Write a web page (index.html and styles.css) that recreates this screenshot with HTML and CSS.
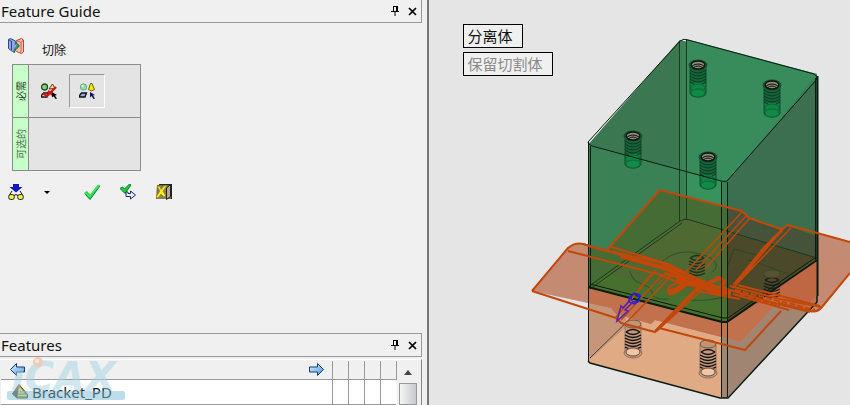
FILE: index.html
```html
<!DOCTYPE html>
<html lang="zh-CN">
<head>
  <meta charset="UTF-8" />
  <meta name="viewport" content="width=device-width, initial-scale=1" />
  <title>Feature Guide</title>
  <link rel="stylesheet" href="styles.css">
</head>
<body>
  <svg class="defs" width="0" height="0" aria-hidden="true">
    <defs>
      <g id="pin"><path d="M2 .5h5M2.500 0v5M5.500 0v5M6.500 0v5M0 5.500h8M4 6v4" fill="none" stroke="#000"/></g>
      <g id="close"><path d="M1 1l7 7M8 1L1 8" fill="none" stroke="#000" stroke-width="1.700"/></g>
      <linearGradient id="arrowFill" x1="0" y1="0" x2="1" y2="1">
        <stop offset="0" stop-color="#e8f6ff"/><stop offset="1" stop-color="#3b8ee0"/>
      </linearGradient>
    </defs>
  </svg>

  <div class="app">
    <aside class="sidebar">
      <section class="guide">
        <header class="panel-bar">
          <h2>Feature Guide</h2>
          <button class="bar-btn" aria-label="Pin"><svg width="9" height="10"><use href="#pin"/></svg></button>
          <button class="bar-btn" aria-label="Close"><svg width="9" height="9"><use href="#close"/></svg></button>
        </header>

        <div class="feature-name">
          <svg width="16" height="16" viewBox="0 0 16 16">
            <path d="M.5 1.500l2-1 5 2.500v3l2 2-3 3v3.500l-2-1-4-3z" fill="#8fa6e6" stroke="#35458c"/>
            <path d="M3.500 3v9M.5 1.500l3 2" stroke="#35458c" fill="none"/>
            <path d="M8.500 2.500l5-2 2 1.500v12l-2 1.500-5-2-2-1.500 4.500-4-3-3z" fill="#f8c3b5" stroke="#c2402e"/>
            <path d="M13 4.500l2.500-2.500M13 4.500v10M13 4.500l-4-2" stroke="#c2402e" fill="none" stroke-width=".8"/>
            <path d="M7 3.500l4 4.500-5 5" fill="none" stroke="#1d8d35" stroke-width="1.500"/>
          </svg>
          <span>切除</span>
        </div>

        <div class="steps">
          <div class="step-label needed">必需</div>
          <div class="step-body">
            <button class="step-btn" aria-label="选择目标体">
              <svg width="16" height="16" viewBox="0 0 16 16">
                <circle cx="3.500" cy="4" r="3" fill="#8fc878" stroke="#14501c" stroke-width="1.300"/>
                <path d="M8 6l3.500-5 2.500 4.500z" fill="#f0e6a0" stroke="#5b3a10"/>
                <path d="M.5 12.500l2-2.500h5l-1.500 4H.5z" fill="#fff" stroke="#111" stroke-width="1.300"/>
                <path d="M2 10.500l4 2.500 9-9M7 8l6 5" stroke="#d4151a" stroke-width="2.400" fill="none"/>
                <path d="M11 9l5 3-2 .5 2 3-1.500.5-2-3-1.500 1.500z" fill="#000"/>
              </svg>
            </button>
            <button class="step-btn selected" aria-label="选择工具体">
              <svg width="16" height="16" viewBox="0 0 16 16">
                <circle cx="4.500" cy="4" r="3.200" fill="#8fdcae" stroke="#6aa883"/>
                <circle cx="3.500" cy="3" r="1" fill="#fff"/>
                <path d="M9.500 6.500l2-6h1.500l2.500 6-3 1.500z" fill="#f4e800" stroke="#6c6000"/>
                <path d="M.5 12.500l2-2.500h5l-1.500 4H.5z" fill="#8ea8ee" stroke="#111" stroke-width="1.300"/>
                <path d="M11 9l5 3-2 .5 2 3-1.500.5-2-3-1.500 1.500z" fill="#13135e"/>
              </svg>
            </button>
          </div>
          <div class="step-label">可选的</div>
          <div class="step-body"></div>
        </div>

        <div class="actions">
          <button class="action" aria-label="预览">
            <svg width="16" height="16" viewBox="0 0 16 16">
              <path d="M5 0h6v3h3.500L8 8.500 1.500 3H5z" fill="#0c16c4"/>
              <path d="M1.500 11L4 7M14.500 11L12 7M6 11.500q2-2 4 0" fill="none" stroke="#111"/>
              <rect x=".7" y="10.500" width="5.600" height="5" rx="2" fill="#f3ee32" stroke="#222"/>
              <rect x="9.700" y="10.500" width="5.600" height="5" rx="2" fill="#f3ee32" stroke="#222"/>
            </svg>
          </button>
          <button class="action more" aria-label="更多">
            <svg width="6" height="3" viewBox="0 0 6 3"><path d="M0 0h6L3 3z"/></svg>
          </button>
          <button class="action" aria-label="确定">
            <svg width="16" height="16" viewBox="0 0 16 16">
              <path d="M0 9l3-2 3 3.500L14 .5l2 1L6 15.500z" fill="#17d938"/>
              <path d="M1.500 10.500L6 15.500 16 2" fill="none" stroke="#0b7d4b"/>
              <path d="M1 8.500l4.500 4L14.500 1.500" fill="none" stroke="#6af079"/>
            </svg>
          </button>
          <button class="action" aria-label="应用">
            <svg width="16" height="16" viewBox="0 0 16 16">
              <path d="M0 4.500l2.500-1.500 2 2L9.500 0l1.500 1L5 9.500z" fill="#17d131" stroke="#0b7d2b"/>
              <path d="M6 8v4.500h4.500v2.500l5-4-5-4v2.500H8V8z" fill="#e4eeff" stroke="#1d2b6b"/>
            </svg>
          </button>
          <button class="action" aria-label="退出">
            <svg width="16" height="16" viewBox="0 0 16 16">
              <path d="M1 1h15v14H0z" fill="#75683f"/>
              <path d="M10.500 4l4-3.500v12l-4 3z" fill="#b5a98e" stroke="#222"/>
              <path d="M2 2h8v13H1z" fill="#8a7d68"/>
              <path d="M1 2l3 .5 1 3L9 1.500h2L7 7l2.500 4.500L8 13l-3-3-3 4-2-1 4-6z" fill="#fdf01d" stroke="#8f7a00" stroke-width=".6"/>
              <path d="M15.500 1v14M3 .5h13" stroke="#222"/>
            </svg>
          </button>
        </div>
      </section>

      <section class="features">
        <header class="panel-bar">
          <h2>Features</h2>
          <button class="bar-btn" aria-label="Pin"><svg width="9" height="10"><use href="#pin"/></svg></button>
          <button class="bar-btn" aria-label="Close"><svg width="9" height="9"><use href="#close"/></svg></button>
        </header>
        <div class="list">
          <table class="tree">
            <thead>
              <tr>
                <th>
                  <div class="nav">
                    <button class="action" aria-label="Back"><svg width="16" height="13" viewBox="0 0 16 13"><path d="M.5 6.500l6-6v3.500h8v5h-8v3.500z" fill="url(#arrowFill)" stroke="#173a78"/></svg></button>
                    <button class="action" aria-label="Forward"><svg width="16" height="13" viewBox="0 0 16 13"><path d="M14.500 6.500l-6-6v3.500h-8v5h8v3.500z" fill="url(#arrowFill)" stroke="#173a78"/></svg></button>
                  </div>
                </th>
                <th></th><th></th><th></th><th></th>
              </tr>
            </thead>
            <tbody>
              <tr>
                <td>
                  <div class="node">
                    <svg width="16" height="15" viewBox="0 0 16 15">
                      <path d="M7 .5l8.500 10v3.500H5L.5 10z" fill="#b9a23c" stroke="#4a4a22"/>
                      <path d="M7 .5L5 14 .5 10z" fill="#6d5422"/>
                      <path d="M8 4.500l3.500 4.500H6.500zM6.500 11.500h8" fill="#7fd079" stroke="#f0e8b0"/>
                    </svg>
                    <span>Bracket_PD</span>
                  </div>
                </td>
                <td></td><td></td><td></td><td></td>
              </tr>
            </tbody>
          </table>
          <div class="scroll">
            <button class="scroll-up" aria-label="Scroll up"><svg width="8" height="5" viewBox="0 0 8 5"><path d="M0 5l4-5 4 5z" fill="#444"/></svg></button>
            <div class="thumb"></div>
          </div>
          <svg class="watermark" width="120" height="46" viewBox="0 0 120 46" aria-hidden="true">
            <rect x="0" y="33" width="118" height="9" rx="2" fill="#7cbcd4"/>
            <text x="4" y="33">ıCAX</text>
            <circle cx="31" cy="4" r="5" fill="#f0a878"/>
            <circle cx="30" cy="3" r="2" fill="#fbe3d0"/>
          </svg>
        </div>
      </section>
    </aside>

    <main class="viewport">
      <svg class="model" width="422" height="405" viewBox="428 0 422 405" role="img" aria-label="Bracket_PD">
        <defs>
          <!-- threaded hole, origin at the centre of its mouth -->
          <g id="coil" fill="none" stroke="#111">
            <path d="M-7 4q7-5 14 0M-7 4q7 5 14 0M-8 7q8 5 16 0M-8 10q8 5 16 0M-8 13q8 5 16 0M-8 16q8 5 16 0M-8 19q8 5 16 0" stroke-width="1.400"/>
          </g>
          <g id="hole">
            <path d="M-8 0v28a8 4 0 0 0 16 0V0z" fill="#0a7a3c" fill-opacity=".65" stroke="#0c4c29"/>
            <path d="M-8 4h16v14h-16z" fill="#123f28" fill-opacity=".4"/>
            <g fill="none" stroke="#0c3b22">
              <path d="M-8 5q8 6 16 0M-8 8q8 6 16 0M-8 11q8 6 16 0M-8 14q8 6 16 0M-8 17q8 6 16 0"/>
            </g>
            <ellipse cy="23" rx="7" ry="4" fill="#0f8444" stroke="#0a6836"/>
            <ellipse cy="28" rx="7" ry="4" fill="#118a48" stroke="#0a6836"/>
            <ellipse rx="9" ry="5" fill="#2d7048" stroke="#0c4c29"/>
            <ellipse rx="7" ry="4" fill="#8b8f78" stroke="#111" stroke-width="1.500"/>
            <path d="M-6 1q6-4 12 0M-5 3q5-4 10 0" fill="none" stroke="#111"/>
          </g>
          <g id="lowerHole">
            <path d="M-8 0v27h16V0z" fill="#b08e74" fill-opacity=".6" stroke="#6b5546" stroke-opacity=".6"/>
            <use href="#coil" y="3"/>
            <ellipse cy="-1" rx="8" ry="4" fill="#c39374" stroke="#6b5546"/>
            <ellipse cy="28" rx="9" ry="5" fill="#c39a7e" stroke="#8b7566"/>
            <ellipse cy="27" rx="7" ry="4" fill="#f2c5a4" stroke="#6b4b36"/>
          </g>
          <clipPath id="upper"><path d="M588 142L680 40l137 34v185l-90 63h-5l-134-35z"/></clipPath>
          <clipPath id="lower"><path d="M588 287l134 35h5l90-63v43l-90 96h-6l-133-36z"/></clipPath>
          <path id="sheet" d="M532 291l36-43q7-6 15-4l24 7 53-61 82 21 7 7 32 11 7-4 62 17v30l-28 35q-5 6-12 4l-33-8-36 39-86-22-4 4-35-10-5-6z"/>
        </defs>

        <!-- lower body -->
        <path d="M588 287l134 35v76l-134-36z" fill="#e0aa84"/>
        <path d="M588 287l38 10v30l-38 34z" fill="#c59679"/>
        <path d="M722 322h5l90-63v43l-90 96h-6z" fill="#a08672"/>
        <path d="M817 259v37l-50-12z" fill="#c58468"/>
        <path d="M590 358l45-44M817 296l-50-12" fill="none" stroke="#4f4036"/>

        <!-- upper body -->
        <path d="M588 145L680 40l137 34v185l-90 63h-5l-134-35z" fill="#3a8255"/>
        <path d="M588 145L680 40v129z" fill="#3b7852"/>
        <path d="M686 39l131 35-90 108-41-11z" fill="#388b5a"/>
        <path d="M727 182l90-104v181l-90 63z" fill="#3b6f50"/>
        <path d="M686 171l35 10v47l-35-9z" fill="#37925e"/>

        <!-- cutting sheet -->
        <use href="#sheet" fill="#c58b72"/>
        <g clip-path="url(#lower)"><use href="#sheet" fill="#c1714c"/></g>
        <g clip-path="url(#upper)">
          <use href="#sheet" fill="#456c35"/>
          <path d="M588 287l92-66q5-3 10-1l127 38-90 64h-5z" fill="#4e6931"/>
          <path d="M588 287l20-14 119 30v19h-5z" fill="#47702f"/>
          <path d="M727 207v41l90 10v-22l-31-10-5 4-32-11-7-8z" fill="#44533a"/>
          <path d="M727 232l90 26-90 64z" fill="#4c492a"/>
        </g>
        <path d="M772 291l45-32v36l-15 14z" fill="#bd5b38" fill-opacity=".5"/>

        <!-- hidden edges -->
        <g fill="none" stroke="#173c20">
          <path d="M679.500 42v179M686.500 40v179"/>
          <path d="M588 287l92-66q5-3 10-1l127 38M590 289l92-66"/>
          <path d="M661 262q18-15 40-8t12 18M630 271q2 10 12 13t11 12q4 4 16 3M728 265l6-16 22 6M690 300q24 2 40-6M749 260l40 14" stroke-opacity=".55"/>
        </g>
        <use href="#coil" x="697" y="254" opacity=".7"/>
        <use href="#coil" x="772" y="276" opacity=".8"/>
        <ellipse cx="772" cy="274" rx="8" ry="4" fill="#5b5a38" fill-opacity=".6" stroke="#3c4a2b"/>

        <use href="#hole" x="698" y="65"/>
        <use href="#hole" x="772" y="85"/>
        <use href="#hole" x="633" y="136"/>
        <use href="#hole" x="708" y="157"/>
        <use href="#lowerHole" x="633" y="325"/>
        <use href="#lowerHole" x="708" y="345"/>

        <!-- visible edges -->
        <g fill="none" stroke="#0b1a10">
          <path d="M588 142l92-101q4-3 8-1l126 34q4 2 3 5l-90 102q-3 1-6 0l-129-35q-4-2-4-4z"/>
          <path d="M588.500 142v219M590.500 146v143M721.500 182v215M727.500 182v215M815.500 78v184" />
          <path d="M817.500 76v220" stroke-width="2"/>
          <path d="M588 287l134 35h5l90-62" stroke-width="2"/>
          <path d="M590 284l133 34h5l88-61"/>
          <path d="M588 361l2 2 130 35h8l89-96v-6" stroke-width="1.500"/>
        </g>

        <!-- sheet edges -->
        <g fill="none" stroke="#c24708" stroke-linejoin="round">
          <path d="M607 250l53-60 82 21 7 7 32 11 7-4 62 17M532 291l36-43q7-6 15-4l22 7M532 291l84 27 5 5 34 9 4-4 86 22 36-39M850 273l-28 34q-5 6-12 4l-32-8" stroke-width="2"/>
          <path d="M568 251l90 23 24 10M583 244l76 22 28 14M600 249l58 13 22 10 26 10M611 247l57 17 30 15M620 257l54 15 32 13" stroke-width="2"/>
          <path d="M742 212l-56 60M746 216l-50 54M749 219l-44 50M782 230l-46 55M786 226l-53 59M791 228l-58 60" stroke-width="1.500"/>
          <path d="M782 230l-17 17-30 37" stroke-width="3"/>
          <path d="M656 270l-40 47M663 274l-42 46M670 277l-43 45M697 287l-42 44M703 289l-44 40" stroke-width="1.500"/>
          <path d="M699 288l-43 43" stroke-width="3"/>
          <path d="M656 272q-7 2-13 11l-11 16M672 276q-8 0-14 9"/>
          <path d="M730 286l50 13 41 8M730 290l48 14 32 8M733 294l56 16M738 285l82 21" stroke-width="2"/>
          <path d="M735 290l80 20M740 294l40 12" stroke-width="2" stroke-dasharray="6 2"/>
          <path d="M640 261l26 7 18 9 20 6 26 8" stroke-width="3"/>
          <path d="M668 293l9-3 9-7 13 2 18 7 14 1" stroke-width="6"/>
          <path d="M699 288l12-6 8-4 5 3-3 6 7 3" stroke-width="4"/>
          <path d="M664 273l17 5 12 7M676 280l25 6 20 8" stroke-width="3"/>
          <path d="M668 293q-1-9 12-10M716 277q8 0 8 8M697 291l43 8" stroke-width="2"/>
        </g>
        <path d="M721.500 250v70M727.500 250v70" stroke="#0b1a10" stroke-opacity=".7"/>

        <!-- direction arrow -->
        <g fill="none" stroke="#1c22d6" stroke-width="1.500">
          <circle cx="635" cy="298" r="4"/>
          <path d="M629 298l5-5 6 2-1 6-5 3-5-2z"/>
          <path d="M630 300l-7 8-2-2-4 15 11-10-3-1 8-8" stroke="#5320b8"/>
        </g>
      </svg>

      <div class="prompts">
        <button class="prompt">分离体</button>
        <button class="prompt muted">保留切割体</button>
      </div>
    </main>
  </div>
</body>
</html>
```

FILE: styles.css
```css
html, body {
  margin: 0;
  padding: 0;
  height: 100%;
  overflow: hidden;
  background: #f0f0f0;
  font-family: "Noto Sans", "Noto Sans CJK SC", sans-serif;
  color: #111;
}
* { box-sizing: border-box; }
svg { display: block; }
button {
  margin: 0;
  padding: 0;
  border: none;
  background: none;
  font: inherit;
  color: inherit;
  cursor: pointer;
}
.defs { position: absolute; }

.app {
  display: flex;
  height: 100vh;
}
.sidebar {
  flex: 1;
  display: flex;
  flex-direction: column;
  justify-content: space-between;
  min-width: 0;
  padding-right: 5px;
  border-right: 2px solid #777;
}

/* panel title bars */
.panel-bar {
  display: flex;
  align-items: center;
  gap: 8px;
  height: 23px;
  padding: 0 4px 0 1px;
  border-right: 1px solid #999;
  border-bottom: 1px solid #999;
}
.panel-bar h2 {
  flex: 1;
  margin: 0;
  font-size: 15px;
  font-weight: normal;
  line-height: 22px;
}

/* feature guide */
.feature-name {
  display: flex;
  gap: 18px;
  padding: 15px 8px 4px;
  font-size: 12px;
  line-height: 20px;
  font-family: "Noto Sans CJK SC", sans-serif;
}
.feature-name span { padding-top: 2px; }
.steps {
  display: grid;
  grid-template-columns: 15px 111px;
  grid-template-rows: 52px 52px;
  gap: 1px;
  width: max-content;
  margin-left: 12px;
  padding: 1px;
  background: #8c8c8c;
}
.step-label {
  display: flex;
  align-items: center;
  justify-content: center;
  background: #c8ffc8;
  writing-mode: vertical-rl;
  text-orientation: sideways;
  transform: rotate(180deg);
  font-family: "Noto Sans CJK SC", sans-serif;
  font-size: 10px;
  line-height: 14px;
  color: #4b6b4b;
}
.step-label.needed { color: #1f3b1f; }
.step-body {
  display: flex;
  align-items: center;
  gap: 4px;
  padding-left: 4px;
  background: #e4e4e4;
}
.step-btn {
  display: flex;
  align-items: center;
  justify-content: center;
  width: 32px;
  height: 34px;
}
.step-btn.selected {
  width: 36px;
  border: 1px solid;
  border-color: #999 #fff #fff #999;
}
.actions {
  display: flex;
  align-items: center;
  gap: 20px;
  padding: 13px 8px;
}
.action {
  display: flex;
  align-items: center;
}
.action.more {
  width: 8px;
  height: 16px;
  margin-right: 12px;
}

/* feature tree */
.features .panel-bar {
  height: 24px;
  border-top: 1px solid #999;
}
.list {
  position: relative;
  display: flex;
  height: 46px;
  margin-top: 2px;
  padding: 1px 2px 0 1px;
  border-top: 1px solid #fff;
  border-right: 1px solid #888;
}
.tree {
  flex: 1;
  border-collapse: collapse;
  table-layout: fixed;
  background: #fff;
}
.tree th, .tree td {
  width: 16px;
  padding: 0;
  border-right: 1px solid #999;
}
.tree th:first-child, .tree td:first-child { width: auto; }
.tree th {
  height: 18px;
  background: #f0f0f0;
  border-bottom: 1px solid #999;
}
.tree td {
  height: 25px;
  border-bottom: 1px solid #999;
}
.tree td:last-child { border-right: none; }
.nav {
  display: flex;
  justify-content: space-between;
  padding: 0 7px 0 9px;
}
.node {
  display: flex;
  align-items: center;
  gap: 4px;
  padding-left: 11px;
  font-size: 15px;
  line-height: 24px;
}
.scroll {
  width: 22px;
  padding: 0 1px;
  background: #f0f0f0;
}
.scroll-up {
  display: flex;
  align-items: center;
  justify-content: center;
  width: 100%;
  height: 22px;
}
.thumb {
  height: 22px;
  margin: 0 1px;
  border: 1px solid #979797;
  background: linear-gradient(to right, #f4f4f4, #c9cacf);
}
.watermark {
  position: absolute;
  left: 7px;
  top: -2px;
  overflow: visible;
  opacity: 0.5;
  pointer-events: none;
}
.watermark text {
  font-family: "DejaVu Sans", sans-serif;
  font-size: 40px;
  font-style: italic;
  font-weight: bold;
  fill: #a5d3e4;
}

/* 3D view */
.viewport {
  flex: 1;
  position: relative;
  min-width: 0;
  overflow: hidden;
  background: #e5e5e5;
}
.model {
  position: absolute;
  right: 0;
  top: 0;
}
.prompts {
  position: relative;
  display: flex;
  flex-direction: column;
  align-items: flex-start;
  gap: 4px;
  padding: 24px 0 0 34px;
}
.prompt {
  height: 24px;
  padding: 0 9px 0 4px;
  border: 1px solid #000;
  background: #f0f0f0;
  font-family: "Noto Sans CJK SC", sans-serif;
  font-size: 15px;
  line-height: 20px;
}
.prompt.muted { color: #8a8a8a; }
```
